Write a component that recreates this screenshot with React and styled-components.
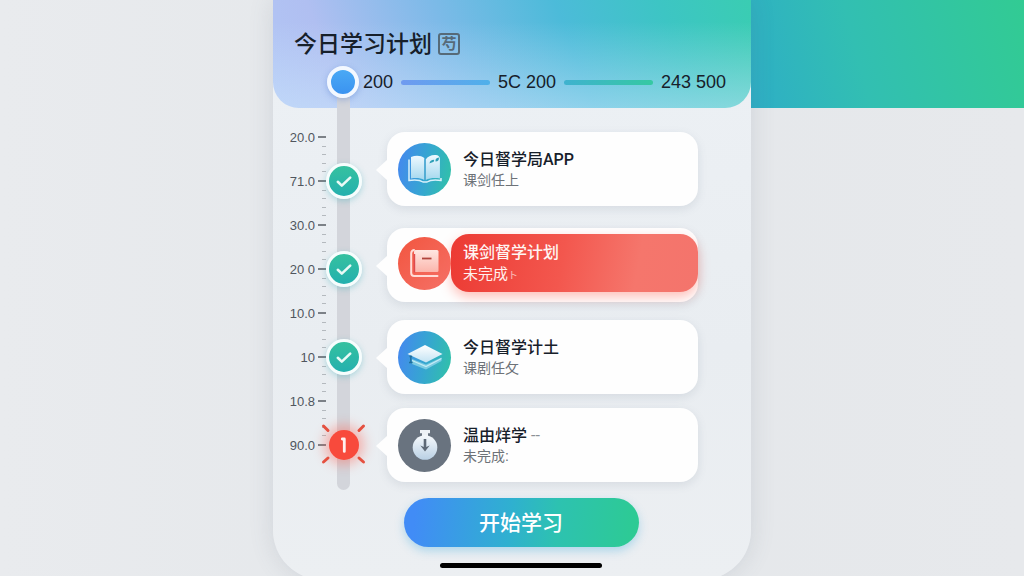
import React from 'react'
import styled, { createGlobalStyle, css } from 'styled-components'

const scale = ['20.0', '71.0', '30.0', '20 0', '10.0', '10', '10.8', '90.0']
const nodes = ['done', 'done', 'done', 'alert']

const tasks = [
    { id: 1, tone: 'study', icon: <BookIcon />, title: '今日督学局APP', note: '课剑任上' },
    { id: 2, tone: 'alert', icon: <NotebookIcon />, title: '课剑督学计划', note: '未完成', mark: 'ト' },
    { id: 3, tone: 'study', icon: <CapIcon />, title: '今日督学计土', note: '课剧任攵' },
    { id: 4, tone: 'idle', icon: <WatchIcon />, title: '温由烊学', dash: '--', note: '未完成:' },
]

function App() {
    return (
        <>
            <GlobalStyle />
            <Page>
                <Phone>
                    <Header>
                        <Title>今日学习计划<Seal>芍</Seal></Title>
                        <Stats>
                            <Bead />
                            <span>200</span>
                            <StatLine from="#6f9af0" to="#4fb0ea" />
                            <span>5C 200</span>
                            <StatLine from="#3fb2cf" to="#35c9a2" />
                            <span>243 500</span>
                        </Stats>
                    </Header>

                    <Body>
                        <Ruler>
                            {scale.map((label, i) => (
                                <Mark key={i}>
                                    <span>{label}</span>
                                    <Ticks>
                                        <Tick hide={i === 0} />
                                        <Tick hide={i === 0} />
                                        <Tick major />
                                        <Tick hide={i === scale.length - 1} />
                                        <Tick hide={i === scale.length - 1} />
                                    </Ticks>
                                </Mark>
                            ))}
                        </Ruler>
                        <Rail>
                            {nodes.map((state, i) => (
                                <Slot key={i}>
                                    {state === 'done' ? <DoneNode><CheckIcon /></DoneNode> : <AlertNode><AlertIcon /></AlertNode>}
                                </Slot>
                            ))}
                        </Rail>
                        <Cards>
                            {tasks.map((task) => (
                                <Card key={task.id} tone={task.tone}>
                                    <Badge tone={task.tone}>{task.icon}</Badge>
                                    <Info tone={task.tone}>
                                        <TaskTitle>{task.title}{task.dash && <Dash> {task.dash}</Dash>}</TaskTitle>
                                        <Note tone={task.tone}>{task.note}{task.mark && <small>{task.mark}</small>}</Note>
                                    </Info>
                                </Card>
                            ))}
                        </Cards>
                    </Body>

                    <Footer>
                        <StartButton type="button">开始学习</StartButton>
                        <HomeBar />
                    </Footer>
                </Phone>
                <Band />
            </Page>
        </>
    )
}

export default App

function CheckIcon() {
    return (
        <svg width="30" height="30" viewBox="0 0 30 30" fill="none">
            <path d="M8.800 15.800l4 3.800 8.400-8" stroke="#e9faf6" strokeWidth="2.600" strokeLinecap="round" strokeLinejoin="round" />
        </svg>
    )
}

function AlertIcon() {
    return (
        <svg width="48" height="48" viewBox="0 0 48 48" fill="none" strokeLinecap="round">
            <path d="M3.500 5l4.500 4.500M43.500 5l-4.500 4.500M3.500 41l4.500-4M43.500 41l-4.500-4" stroke="#e5503f" strokeWidth="3" />
            <path d="M22.300 18h2v12.400" stroke="#fff0ee" strokeWidth="2.800" strokeLinejoin="round" />
        </svg>
    )
}

function BookIcon() {
    return (
        <svg width="38" height="34" viewBox="0 0 38 34">
            <defs>
                <linearGradient id="page" x1="0" y1="0" x2="0" y2="1">
                    <stop offset="0" stopColor="#eef9ff" />
                    <stop offset="1" stopColor="#a5d8ee" />
                </linearGradient>
            </defs>
            <path d="M3 7.500v21c6-.8 11-.5 14 1.500h4c3-2 8-2.300 14-1.500V26" fill="none" stroke="#d9f1fb" strokeWidth="1.500" />
            <path d="M5 5c5-2 10-1.500 13.300 1v22c-4-2-8.300-2.500-13.300-1.500z" fill="url(#page)" />
            <path d="M19.700 7.500c2-3 5-4.500 9-4.500 3-.5 5 1 5.200 4V26.500c-5-1-10-.5-14.200 1.500z" fill="url(#page)" />
            <path d="M19 7.500v20.500" stroke="#4aa3cf" strokeWidth="1" />
            <path d="M23.500 11.500c.3-2.600 1.800-3.800 4.600-3.800.2 1.400-.4 2.300-1.700 2.600-.8.200-1.600.4-2.900 1.200zM29.500 9.500c-.2-2.500.8-3.700 3.400-4 .3 2.500-.8 3.900-3.400 4z" fill="#2d9fb7" />
        </svg>
    )
}

function NotebookIcon() {
    return (
        <svg width="32" height="32" viewBox="0 0 32 32">
            <defs>
                <linearGradient id="cover" x1="0" y1="0" x2="0" y2="1">
                    <stop offset="0" stopColor="#ffe6e1" />
                    <stop offset="1" stopColor="#fbb6ac" />
                </linearGradient>
            </defs>
            <path d="M5 3C3.200 3.300 2.200 4.500 2.200 6.500v19.500c0 2 1 3 3 3H28.500" fill="none" stroke="#ffdcd7" strokeWidth="2" strokeLinecap="round" />
            <rect x="5" y="3" width="24.500" height="22" rx="1.500" fill="url(#cover)" />
            <path d="M5.500 25.500V7" stroke="#dd4a50" strokeWidth="1.400" />
            <path d="M13 11.500h9.500" stroke="#b0443d" strokeWidth="1.800" />
        </svg>
    )
}

function CapIcon() {
    return (
        <svg width="38" height="30" viewBox="0 0 38 30">
            <defs>
                <linearGradient id="cap" x1="0" y1="0" x2="0" y2="1">
                    <stop offset="0" stopColor="#ffffff" />
                    <stop offset="1" stopColor="#c3e3f3" />
                </linearGradient>
            </defs>
            <path d="M6 17v5l14 5.500 15.500-8.500v-3.500l-15.500 7z" fill="#7ccbe2" />
            <path d="M6 18.500L20 24.500l15.500-8" fill="none" stroke="#c4ecf5" strokeWidth="1.200" />
            <path d="M1.500 12L19 3l17.500 9L20 20.500z" fill="url(#cap)" />
            <path d="M4.800 13.500v7M3 20.500h3.600M3.500 14.500h2.600" stroke="#1f6f9b" strokeWidth="1.300" />
        </svg>
    )
}

function WatchIcon() {
    return (
        <svg width="28" height="32" viewBox="0 0 28 32">
            <defs>
                <linearGradient id="dial" x1="0" y1="0" x2="0" y2="1">
                    <stop offset="0" stopColor="#f6f9fc" />
                    <stop offset="1" stopColor="#b9d0e4" />
                </linearGradient>
            </defs>
            <path d="M9 1h10v3.200h-2v4h-6v-4H9z" fill="#eef2f6" />
            <circle cx="14" cy="18.500" r="12.300" fill="url(#dial)" />
            <path d="M14 10v10" stroke="#5d6875" strokeWidth="2.600" />
            <path d="M9.300 16.500l4.700 2 4.700-2-4.700 6z" fill="#5d6875" />
        </svg>
    )
}

const GlobalStyle = createGlobalStyle`
    html {
        scrollbar-width: none;
    }
    body {
        margin: 0;
        background-color: #e6e9ec;
        font-family: "Liberation Sans", "Noto Sans CJK SC", sans-serif;
        color: #17202a;
    }
    * {
        box-sizing: border-box;
    }
`

const Page = styled.div`
    min-height: 100vh;
    display: grid;
    grid-template-columns: 1fr minmax(0, 478px) 1fr;
    background: linear-gradient(90deg, #e9ebee 0%, #e4e7ea 50%, #e7e9ec 100%);
`

const Phone = styled.main`
    grid-column: 2;
    z-index: 1;
    padding-bottom: 12px;
    border-radius: 0 0 50px 50px;
    background: linear-gradient(180deg, #edf1f5 0%, #e9edf1 60%, #eceff2 100%);
    box-shadow: 0 0 24px rgba(90, 100, 120, 0.16);
`

const Band = styled.div`
    grid-column: 3;
    height: 108px;
    background: linear-gradient(75deg, #2eaec6 0%, #32bfb2 40%, #32cb93 100%);
`

const Header = styled.header`
    height: 108px;
    padding: 28px 25px 0 21px;
    border-radius: 0 0 26px 26px;
    background:
        linear-gradient(180deg, rgba(205, 228, 255, 0) 20%, rgba(205, 232, 252, 0.5) 100%),
        linear-gradient(70deg, #b2c6f5 0%, #b0bff1 14%, #7dbae8 38%, #4cbbd9 62%, #3dc5c4 82%, #3acdb2 100%);
`

const Title = styled.h1`
    display: flex;
    align-items: center;
    gap: 6px;
    margin: 0;
    font-size: 23px;
    font-weight: 500;
    line-height: 32px;
`

const Seal = styled.span`
    width: 22px;
    height: 22px;
    border: 2px solid #566a78;
    border-radius: 3px;
    color: #566a78;
    font-size: 15px;
    font-weight: bold;
    line-height: 17px;
    text-align: center;
`

const Stats = styled.div`
    display: flex;
    align-items: center;
    gap: 8px;
    margin-left: 33px;
    height: 44px;
    font-size: 18px;
`

const Bead = styled.span`
    z-index: 2;
    width: 32px;
    height: 32px;
    margin-right: -4px;
    border: 4px solid #f3f8ff;
    border-radius: 50%;
    background: linear-gradient(180deg, #4aa9f5, #3b93f0);
    box-shadow: 0 2px 6px rgba(60, 110, 200, 0.35);
`

const StatLine = styled.span`
    flex: 1;
    height: 5px;
    border-radius: 3px;
    background: linear-gradient(90deg, ${props => props.from}, ${props => props.to});
`

const Body = styled.section`
    display: grid;
    grid-template-columns: 53px 36px minmax(0, 1fr);
`

const Ruler = styled.div`
    padding-top: 7px;
`

const Mark = styled.div`
    display: flex;
    align-items: center;
    justify-content: flex-end;
    gap: 3px;
    height: 44px;
    color: #50565e;
    font-size: 13px;
`

const Ticks = styled.div`
    display: flex;
    flex-direction: column;
    align-items: flex-end;
    justify-content: space-around;
    width: 8px;
    height: 100%;
`

const Tick = styled.span`
    width: ${props => props.major ? '8' : '4'}px;
    height: ${props => props.major ? '2' : '1'}px;
    background-color: ${props => props.major ? '#7c8187' : '#b4b9be'};
    visibility: ${props => props.hide ? 'hidden' : 'visible'};
`

const Rail = styled.div`
    position: relative;
    padding-top: 29px;
    /* the track runs up behind the bead of the header */
    &::before {
        content: '';
        position: absolute;
        top: -18px;
        bottom: 0;
        left: 11px;
        width: 13px;
        border-radius: 0 0 7px 7px;
        background-color: #d3d5db;
    }
`

const Slot = styled.div`
    position: relative;
    display: flex;
    align-items: center;
    justify-content: center;
    height: 88px;
`

const nodeShape = css`
    display: flex;
    align-items: center;
    justify-content: center;
    flex-shrink: 0;
    border-radius: 50%;
`

const DoneNode = styled.span`
    ${nodeShape}
    width: 36px;
    height: 36px;
    border: 3px solid #f6fdfd;
    background: linear-gradient(180deg, #35c19f, #24b0ae);
    box-shadow: 0 2px 6px rgba(50, 170, 180, 0.35);
`

const AlertNode = styled.span`
    ${nodeShape}
    width: 30px;
    height: 30px;
    background-color: #f84a3c;
    box-shadow: 0 0 12px 5px rgba(255, 90, 75, 0.4);
    svg {
        flex-shrink: 0;
    }
`

const Cards = styled.div`
    display: flex;
    flex-direction: column;
    gap: 14px;
    padding: 24px 53px 8px 25px;
`

const Card = styled.article`
    position: relative;
    display: flex;
    align-items: center;
    height: 74px;
    padding-left: 11px;
    border-radius: 18px;
    background-color: #fefefe;
    box-shadow: 0 3px 10px rgba(90, 105, 130, 0.14);
    ${props => props.tone === 'alert' && css`
        margin: 8px 0 4px;
        padding-bottom: 4px;
    `}
    &::before {
        content: '';
        position: absolute;
        top: 27px;
        left: -11px;
        width: 12px;
        height: 22px;
        background-color: #fefefe;
        clip-path: polygon(0 50%, 100% 0, 100% 100%);
    }
`

const badgeColors = {
    study: 'linear-gradient(100deg, #4489ee 5%, #36a5d2 50%, #30c3a6 100%)',
    alert: 'linear-gradient(135deg, #f2553f, #f57167)',
    idle: '#69737f',
}

const Badge = styled.div`
    display: flex;
    align-items: center;
    justify-content: center;
    flex-shrink: 0;
    width: 53px;
    height: 53px;
    border-radius: 50%;
    background: ${props => badgeColors[props.tone]};
`

const Info = styled.div`
    flex: 1;
    height: 58px;
    padding: 9px 12px 7px;
    border-radius: 18px;
    ${props => props.tone === 'alert' && css`
        padding-top: 8px;
        color: #fff5f3;
        background: linear-gradient(100deg, #ec3a33 0%, #f3574e 45%, #f5766c 75%, #f4746c 100%);
        box-shadow: 0 5px 12px rgba(255, 100, 85, 0.4);
    `}
`

const TaskTitle = styled.h2`
    margin: 0;
    font-family: Roboto, "Noto Sans CJK SC", sans-serif;
    font-size: 16px;
    font-weight: 500;
    line-height: 21px;
`

const Dash = styled.span`
    color: #8b9096;
    font-weight: normal;
`

const Note = styled.p`
    margin: 0;
    color: ${props => props.tone === 'alert' ? '#fff0ee' : '#6d7278'};
    font-size: ${props => props.tone === 'alert' ? '15' : '14'}px;
    line-height: 21px;
    small {
        font-size: 10px;
        opacity: 0.7;
    }
`

const Footer = styled.footer`
    display: flex;
    flex-direction: column;
    align-items: center;
    gap: 16px;
    padding: 8px 0 0 18px;
`

const StartButton = styled.button`
    width: 235px;
    height: 49px;
    padding: 0 0 3px;
    border: none;
    border-radius: 25px;
    color: #fff;
    background: linear-gradient(95deg, #418cf6 5%, #2fb0d0 45%, #2dc2b0 65%, #2dcb92 100%);
    box-shadow: 0 4px 10px rgba(60, 170, 220, 0.35);
    font-family: inherit;
    font-size: 21px;
    font-weight: 500;
    cursor: pointer;
`

const HomeBar = styled.div`
    width: 162px;
    height: 5px;
    border-radius: 3px;
    background-color: #000;
`
